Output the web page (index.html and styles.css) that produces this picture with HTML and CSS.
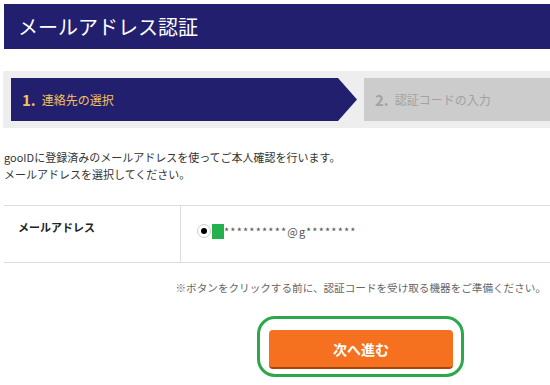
FILE: index.html
```html
<!DOCTYPE html>
<html lang="ja">
<head>
<meta charset="utf-8">
<meta name="viewport" content="width=device-width, initial-scale=1">
<link rel="stylesheet" href="styles.css">
</head>
<body>

<div class="page">
	<div class="title-bar"><h1>メールアドレス認証</h1></div>

	<div class="steps">
		<div class="step step-current"><span class="step-num">1.</span>連絡先の選択</div>
		<div class="step step-next"><span class="step-num">2.</span>認証コードの入力</div>
	</div>

	<p class="lead">gooIDに登録済みのメールアドレスを使ってご本人確認を行います。<br>メールアドレスを選択してください。</p>

	<div class="form-row">
		<div class="form-label">メールアドレス</div>
		<div class="form-value">
			<span class="radio"><span class="radio-dot"></span></span>
			<span class="mask"></span>
			<span class="addr">**********@g********</span>
		</div>
	</div>

	<p class="note">※ボタンをクリックする前に、認証コードを受け取る機器をご準備ください。</p>

	<div class="actions">
		<div class="highlight">
			<button class="btn-next" type="button">次へ進む</button>
		</div>
	</div>
</div>

</body>
</html>
```

FILE: styles.css
```css
body {
	margin: 0;
	background: #fff;
	font-family: "Noto Sans CJK JP", "Noto Sans", sans-serif;
	color: #333;
}

.page {
	padding: 4px 0 0 4px;
}

.title-bar {
	height: 45px;
	background: #231f6f;
	display: flex;
	align-items: center;
	padding-left: 14px;
}

.title-bar h1 {
	margin: 0;
	color: #fff;
	font-size: 20px;
	font-weight: normal;
}

.steps {
	margin: 22px 0 0 -1px;
	background: #eeeeee;
	padding: 7px 0 7px 8px;
	display: flex;
	gap: 7px;
}

.step {
	height: 43px;
	display: flex;
	align-items: center;
	font-size: 12px;
}

.step-num {
	font-size: 15px;
	font-weight: bold;
	margin-right: 6px;
}

.step-current {
	width: 346px;
	padding-left: 11px;
	box-sizing: border-box;
	background: #231f6f;
	color: #f3c35a;
	clip-path: polygon(0 0, 327px 0, 346px 50%, 327px 100%, 0 100%);
}

.step-next {
	flex: 1;
	padding-left: 11px;
	background: #cccccc;
	color: #a2a2a2;
}

.lead {
	margin: 21px 0 0 0;
	font-size: 11px;
	line-height: 17px;
	color: #333;
}

.form-row {
	margin-top: 22px;
	display: flex;
	border-top: 1px solid #dddddd;
	border-bottom: 1px solid #dddddd;
	height: 56px;
}

.form-label {
	width: 177px;
	border-right: 1px solid #dddddd;
	padding: 13px 0 0 14px;
	box-sizing: border-box;
	font-size: 11px;
	font-weight: bold;
	color: #222;
}

.form-value {
	display: flex;
	align-items: center;
	padding: 0 0 6px 16px;
	font-size: 11px;
	color: #555;
}

.radio {
	width: 14px;
	height: 14px;
	border: 1px solid #cfcfcf;
	border-radius: 50%;
	box-sizing: border-box;
	display: flex;
	align-items: center;
	justify-content: center;
	margin-right: 1px;
}

.radio-dot {
	width: 6px;
	height: 6px;
	border-radius: 50%;
	background: #000;
}

.mask {
	width: 12px;
	height: 15px;
	background: #22b14c;
}

.addr {
	letter-spacing: 1.2px;
}

.note {
	margin: 17px 4px 0 0;
	text-align: right;
	font-size: 10.6px;
	color: #666;
}

.actions {
	margin-top: 21px;
	padding-left: 253px;
	display: flex;
}

.highlight {
	border: 3px solid #2aa84a;
	border-radius: 18px;
	padding: 11px 8px 5px 9px;
}

.btn-next {
	width: 184px;
	height: 39px;
	border: none;
	border-bottom: 2px solid #a9460c;
	border-radius: 4px;
	background: #f5711f;
	color: #fff;
	font-family: "Noto Sans CJK JP", sans-serif;
	font-size: 14px;
	font-weight: bold;
	display: block;
}
```
